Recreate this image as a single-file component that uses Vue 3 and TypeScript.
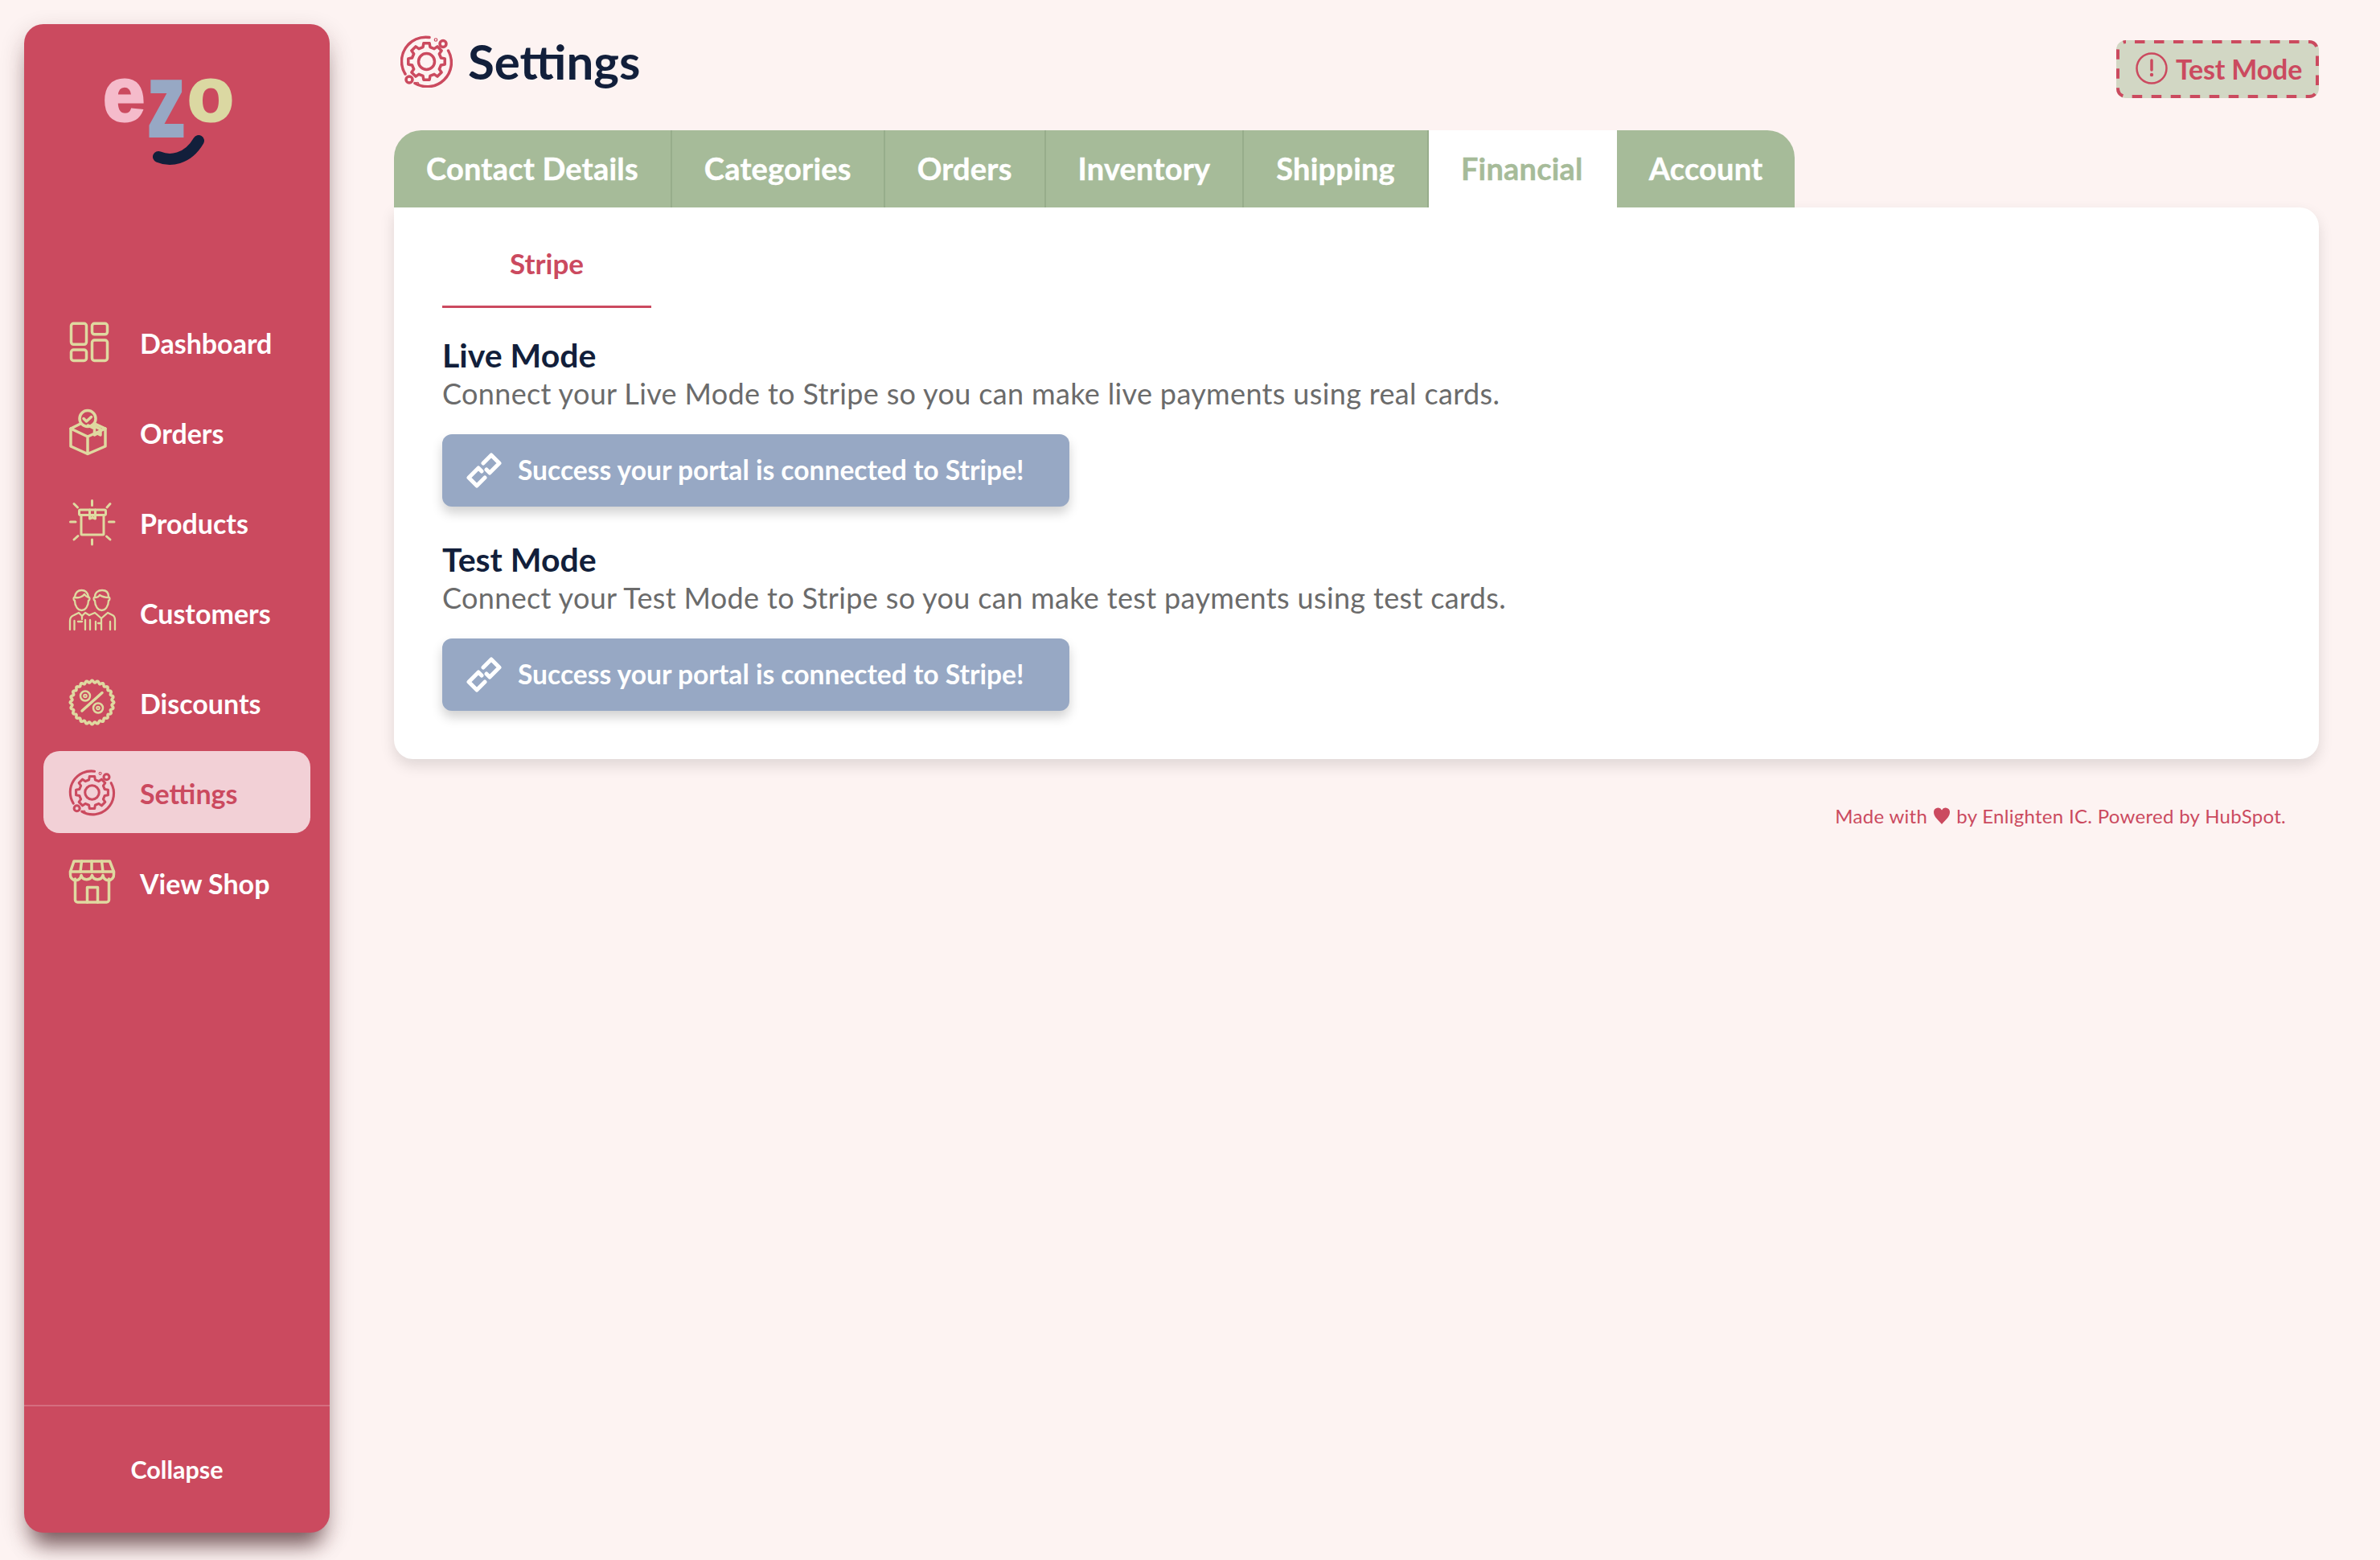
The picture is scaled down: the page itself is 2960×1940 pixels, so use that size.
<script setup lang="ts">
function gearPath(cx: number, cy: number, ro: number, ri: number, teeth: number): string {
  const pts: string[] = []
  const step = (Math.PI * 2) / teeth
  for (let i = 0; i < teeth; i++) {
    const a = i * step - Math.PI / 2
    const seq: [number, number][] = [
      [ri, a - step * 0.31],
      [ro, a - step * 0.2],
      [ro, a + step * 0.2],
      [ri, a + step * 0.31],
    ]
    for (const [r, t] of seq) {
      pts.push(`${(cx + r * Math.cos(t)).toFixed(2)} ${(cy + r * Math.sin(t)).toFixed(2)}`)
    }
  }
  return 'M' + pts.join('L') + 'Z'
}

function scallopPath(cx: number, cy: number, r: number, amp: number, n: number): string {
  const pts: string[] = []
  const total = n * 8
  for (let i = 0; i < total; i++) {
    const t = (i / total) * Math.PI * 2
    const rr = r + amp * Math.cos(n * t)
    pts.push(`${(cx + rr * Math.cos(t)).toFixed(2)} ${(cy + rr * Math.sin(t)).toFixed(2)}`)
  }
  return 'M' + pts.join('L') + 'Z'
}

const settingsIcon = `
  <path d="M36 2.500A30 30 0 0 0 6 48" />
  <path d="M18 59.500A30 30 0 0 0 59.500 19" />
  <circle cx="53" cy="10.500" r="4" />
  <circle cx="11" cy="55" r="4" />
  <circle cx="44" cy="5.500" r="0.600" />
  <circle cx="21" cy="60" r="0.600" />
  <path d="${gearPath(32.5, 32.5, 23, 18.5, 8)}" />
  <circle cx="32.500" cy="32.500" r="10" />
`

const icons: Record<string, string> = {
  dashboard: `
    <rect x="2.500" y="5.300" width="19" height="26" rx="3" />
    <rect x="28.500" y="5.300" width="19" height="13.500" rx="3" />
    <rect x="2.500" y="38" width="19" height="13.500" rx="3" />
    <rect x="28.500" y="26" width="19" height="25.500" rx="3" />`,
  orders: `
    <circle cx="23" cy="11.500" r="10" />
    <path d="M18 11.500l3.500 3.500 6-5.500" />
    <path d="M14 18L2 24v22l21 9.500 22-9.500V24l-13-6" />
    <path d="M2 24l21 10 22-10M23 34v21" />
    <path d="M30 20l9 5v7l-4-2-3.500 2v-8l-8-4" />`,
  products: `
    <g stroke-width="3">
      <rect x="12.500" y="13" width="33" height="6.500" rx="1.500" />
      <path d="M15 19.500V43a1 1 0 0 0 1 1h26a1 1 0 0 0 1-1V19.500" />
      <path d="M25.500 13v11l3.500-1.500 3.500 1.500V13" />
      <path d="M28.500 1.500v6M28.500 50v6M1.500 28h6.500M49.500 28h6.500M6 5.500l4.500 4.500M51 5.500L47 10M6 50l5-4.500M51 50l-4.500-4" />
    </g>`,
  customers: `
    <g stroke-width="2.300">
      <path d="M7 14c0 7 4 12 8.500 12S24 21 24 14" />
      <path d="M7 14c-2-1-2-4 0-5 1-5 4-8 8.500-8S23 4 24 9c2 1 2 4 0 5" />
      <path d="M7 10c5 1 10-1 12-4 1 2 3 3 5 4" />
      <path d="M32 14c0 7 4 12 8.500 12S49 21 49 14" />
      <path d="M32 14c-2-1-2-4 0-5 0-5 4-8 9-8s8 3 8 8c2 1 2 4 0 5" />
      <path d="M32 10c3 0 5-1 6-3 3 2 7 3 11 3" />
      <path d="M1 50V39c0-4 2-6 5-7l6-3 4 4 4-4 5 3" />
      <path d="M6.500 50V39M20 50V38M11 40h5M16 33v4" />
      <path d="M25 32l7-3 8 7 8-7 6 3c2 1 3 3 3 6v12" />
      <path d="M40 36v14M33 40v10M51 40v10M36 42h4M26 50V38" />
    </g>`,
  discounts: `
    <path d="${scallopPath(28.5, 28.5, 26, 1.3, 24)}" />
    <path d="M16 39L41 16.500" stroke-width="3.500" />
    <circle cx="20" cy="20.500" r="6" stroke-width="2.500" />
    <circle cx="20" cy="20.500" r="1.800" stroke-width="2" />
    <circle cx="36" cy="35.500" r="6" stroke-width="2.500" />
    <circle cx="36" cy="35.500" r="1.800" stroke-width="2" />`,
  settings: settingsIcon,
  shop: `
    <path d="M6 2h44.500l5 13H1.500z" />
    <path d="M15.500 2l-1.500 13M28 2v13M40.500 2l1.500 13" />
    <path d="M1.500 15v3.500a6.500 6.500 0 0 0 13.500 1 7 7 0 0 0 13.500 0 7 7 0 0 0 13.500 0 6.500 6.500 0 0 0 13.500-1V15" />
    <path d="M7.500 24v26a3 3 0 0 0 3 3h36a3 3 0 0 0 3-3V24" />
    <path d="M22.500 53V34.500h13V53" />`,
}

const navItems = [
  { label: 'Dashboard', icon: 'dashboard', active: false, box: '0 0 57 57' },
  { label: 'Orders', icon: 'orders', active: false, box: '0 0 57 57' },
  { label: 'Products', icon: 'products', active: false, box: '0 0 57 57' },
  { label: 'Customers', icon: 'customers', active: false, box: '0 0 57 57' },
  { label: 'Discounts', icon: 'discounts', active: false, box: '0 0 57 57' },
  { label: 'Settings', icon: 'settings', active: true, box: '0 0 65 65' },
  { label: 'View Shop', icon: 'shop', active: false, box: '0 0 57 57' },
]

const tabs = [
  { label: 'Contact Details', active: false },
  { label: 'Categories', active: false },
  { label: 'Orders', active: false },
  { label: 'Inventory', active: false },
  { label: 'Shipping', active: false },
  { label: 'Financial', active: true },
  { label: 'Account', active: false },
]

const sections = [
  { title: 'Live Mode', text: 'Connect your Live Mode to Stripe so you can make live payments using real cards.' },
  { title: 'Test Mode', text: 'Connect your Test Mode to Stripe so you can make test payments using test cards.' },
]
</script>

<template>
  <div class="page">
    <aside class="sidebar">
      <div class="logo">
        <div class="logo-word">
          <span class="l-e">e</span><span class="l-z">z</span><span class="l-o">o</span>
        </div>
        <svg class="smile" width="70" height="44" viewBox="0 0 70 44" fill="none">
          <path d="M7 29c14 6 36 4 50-20" stroke="#121f3b" stroke-width="14" stroke-linecap="round" />
        </svg>
      </div>
      <nav class="nav">
        <a v-for="item in navItems" :key="item.label" class="nav-item" :class="{ active: item.active }">
          <svg class="nav-icon" :viewBox="item.box" v-html="icons[item.icon]"></svg>
          <span>{{ item.label }}</span>
        </a>
      </nav>
      <div class="collapse"><span>Collapse</span></div>
    </aside>

    <main class="main">
      <header class="header">
        <div class="title">
          <svg class="title-icon" viewBox="0 0 65 65" v-html="settingsIcon"></svg>
          <h1>Settings</h1>
        </div>
        <div class="badge">
          <svg class="badge-border" width="252" height="72" viewBox="0 0 252 72" fill="none">
            <rect x="2" y="2" width="248" height="68" rx="10" stroke="#cb4a5f" stroke-width="4" stroke-dasharray="12.500 11.500" stroke-dashoffset="13" />
          </svg>
          <svg width="40" height="40" viewBox="0 0 40 40" fill="none">
            <circle cx="20" cy="20" r="18.500" stroke="#cb4a5f" stroke-width="2.500" />
            <path d="M20 10v12" stroke="#cb4a5f" stroke-width="3.500" stroke-linecap="round" />
            <circle cx="20" cy="28" r="2.200" fill="#cb4a5f" />
          </svg>
          <span>Test Mode</span>
        </div>
      </header>

      <div class="tabs">
        <button v-for="tab in tabs" :key="tab.label" class="tab" :class="{ active: tab.active }">{{ tab.label }}</button>
      </div>

      <section class="card">
        <div class="subtab">Stripe</div>
        <div v-for="s in sections" :key="s.title" class="block">
          <h2>{{ s.title }}</h2>
          <p>{{ s.text }}</p>
          <button class="connect">
            <svg width="44" height="44" viewBox="0 0 44 44" fill="none" stroke="#fff" stroke-width="5" stroke-linejoin="round" stroke-linecap="round">
              <path d="M23 31L13 41 3 31l12-12 4 4" />
              <path d="M21 13L31 3l10 10-12 12-4-4" />
            </svg>
            <span>Success your portal is connected to Stripe!</span>
          </button>
        </div>
      </section>

      <footer class="footer">
        Made with
        <svg class="heart" width="20" height="22" viewBox="0 0 20 22"><path d="M10 21C6 16 0 12 0 6a5.300 5.300 0 0 1 10-2.500A5.300 5.300 0 0 1 20 6c0 6-6 10-10 15z" fill="#cb4a5f" /></svg>
        by Enlighten IC. Powered by HubSpot.
      </footer>
    </main>
  </div>
</template>

<style>
html, body {
  margin: 0;
  background: #fdf3f2;
}
</style>

<style scoped>
.page {
  display: flex;
  box-sizing: border-box;
  width: 2960px;
  height: 1940px;
  padding: 30px 76px 34px 30px;
  background: #fdf3f2;
  font-family: "Lato", "Noto Sans", sans-serif;
  color: #121f3b;
}
.sidebar {
  width: 380px;
  flex: none;
  display: flex;
  flex-direction: column;
  background: #cb4a5f;
  border-radius: 24px;
  box-shadow: 0 26px 26px -12px rgba(60, 20, 25, 0.6), 0 12px 30px rgba(60, 20, 25, 0.24);
}
.logo {
  height: 344px;
  padding: 53px 0 0 98px;
  box-sizing: border-box;
  flex: none;
}
.logo-word {
  display: flex;
  height: 70px;
  font-family: "Liberation Sans", sans-serif;
  font-weight: 700;
  font-size: 94px;
  line-height: 70px;
  -webkit-text-stroke: 3px currentColor;
  paint-order: stroke fill;
}
.l-e { color: #f5bbcb; }
.l-z { color: #97a8c4; margin: 0 3px; transform: scale(1, 1.36); transform-origin: 50% 20%; }
.l-o { color: #dbd8a2; }
.smile {
  display: block;
  margin: 13px 0 0 62px;
}
.nav {
  display: flex;
  flex-direction: column;
  gap: 10px;
  padding: 0 24px;
  flex: 1;
}
.nav-item {
  display: flex;
  align-items: center;
  gap: 31px;
  height: 102px;
  padding-left: 32px;
  border-radius: 20px;
  color: #fff;
  font-size: 34px;
  font-weight: 700;
}
.nav-item span { position: relative; top: 1px; }
.nav-item.active {
  background: #f2d0d6;
  color: #cb4a5f;
}
.nav-icon {
  width: 57px;
  height: 57px;
  flex: none;
  fill: none;
  stroke: #dfd9a0;
  stroke-width: 3.500;
  stroke-linecap: round;
  stroke-linejoin: round;
  overflow: visible;
}
.nav-item.active .nav-icon { stroke: #cb4a5f; }
.collapse {
  height: 159px;
  box-sizing: border-box;
  padding-bottom: 2px;
  border-top: 2px solid rgba(255, 255, 255, 0.2);
  display: flex;
  align-items: center;
  justify-content: center;
  color: #fff;
  font-size: 30.500px;
  font-weight: 700;
  flex: none;
}
.main {
  flex: 1;
  min-width: 0;
  padding-left: 80px;
}
.header {
  display: flex;
  justify-content: space-between;
  align-items: flex-start;
  height: 132px;
}
.title {
  display: flex;
  align-items: center;
  gap: 19px;
  padding: 14px 0 0 8px;
}
.title-icon {
  width: 65px;
  height: 65px;
  fill: none;
  stroke: #cb4a5f;
  stroke-width: 3.500;
  stroke-linecap: round;
  stroke-linejoin: round;
}
h1 {
  margin: 0;
  font-size: 60px;
  line-height: 65px;
  font-weight: 700;
}
.badge {
  position: relative;
  display: flex;
  align-items: center;
  gap: 10px;
  box-sizing: border-box;
  width: 252px;
  height: 72px;
  margin-top: 20px;
  padding: 0 0 2px 24px;
  background: #d2d7c4;
  border-radius: 12px;
  color: #cb4a5f;
  font-size: 34px;
  letter-spacing: -0.2px;
  font-weight: 700;
  white-space: nowrap;
}
.badge-border {
  position: absolute;
  left: 0;
  top: 0;
}
.tabs {
  display: flex;
  height: 96px;
}
.tab {
  height: 96px;
  padding: 0 40px 2px;
  border: 0;
  border-right: 2px solid #97ad8b;
  background: #a6bb99;
  color: #fff;
  font: inherit;
  font-size: 38px;
  font-weight: 700;
  letter-spacing: 0.2px;
  -webkit-text-stroke: 0.4px currentColor;
  white-space: nowrap;
}
.tab:first-child { border-top-left-radius: 34px; }
.tab:last-child { border-top-right-radius: 34px; border-right: 0; }
.tab.active {
  background: #fff;
  color: #a6bb99;
  border-right-color: #fff;
}
.card {
  background: #fff;
  border-radius: 0 24px 24px 24px;
  box-shadow: 0 8px 18px rgba(0, 0, 0, 0.12);
  padding: 0 60px 60px;
}
.subtab {
  box-sizing: border-box;
  width: 260px;
  height: 125px;
  padding-top: 45px;
  border-bottom: 3px solid #cb4a5f;
  text-align: center;
  color: #cb4a5f;
  font-size: 35px;
  line-height: 48px;
  font-weight: 700;
  margin-bottom: 34px;
}
.block + .block { margin-top: 41px; }
h2 {
  margin: 0;
  font-size: 41px;
  line-height: 49px;
  font-weight: 700;
}
p {
  margin: 0 0 28px;
  font-size: 36px;
  line-height: 46px;
  letter-spacing: 0.35px;
  color: #6b6b6b;
}
.connect {
  display: flex;
  align-items: center;
  gap: 20px;
  width: 780px;
  height: 90px;
  padding: 0 0 3px 30px;
  box-sizing: border-box;
  border: 0;
  border-radius: 12px;
  background: #97a8c4;
  color: #fff;
  font: inherit;
  font-size: 33.600px;
  font-weight: 700;
  box-shadow: 0 8px 14px rgba(0, 0, 0, 0.18);
  white-space: nowrap;
}
.connect svg { margin-top: 3px; }
.footer {
  display: flex;
  justify-content: flex-end;
  align-items: center;
  gap: 8px;
  margin-top: 54px;
  padding-right: 41px;
  color: #cb4a5f;
  font-size: 24px;
  letter-spacing: 0.3px;
  line-height: 34px;
}
.heart { flex: none; }
</style>
